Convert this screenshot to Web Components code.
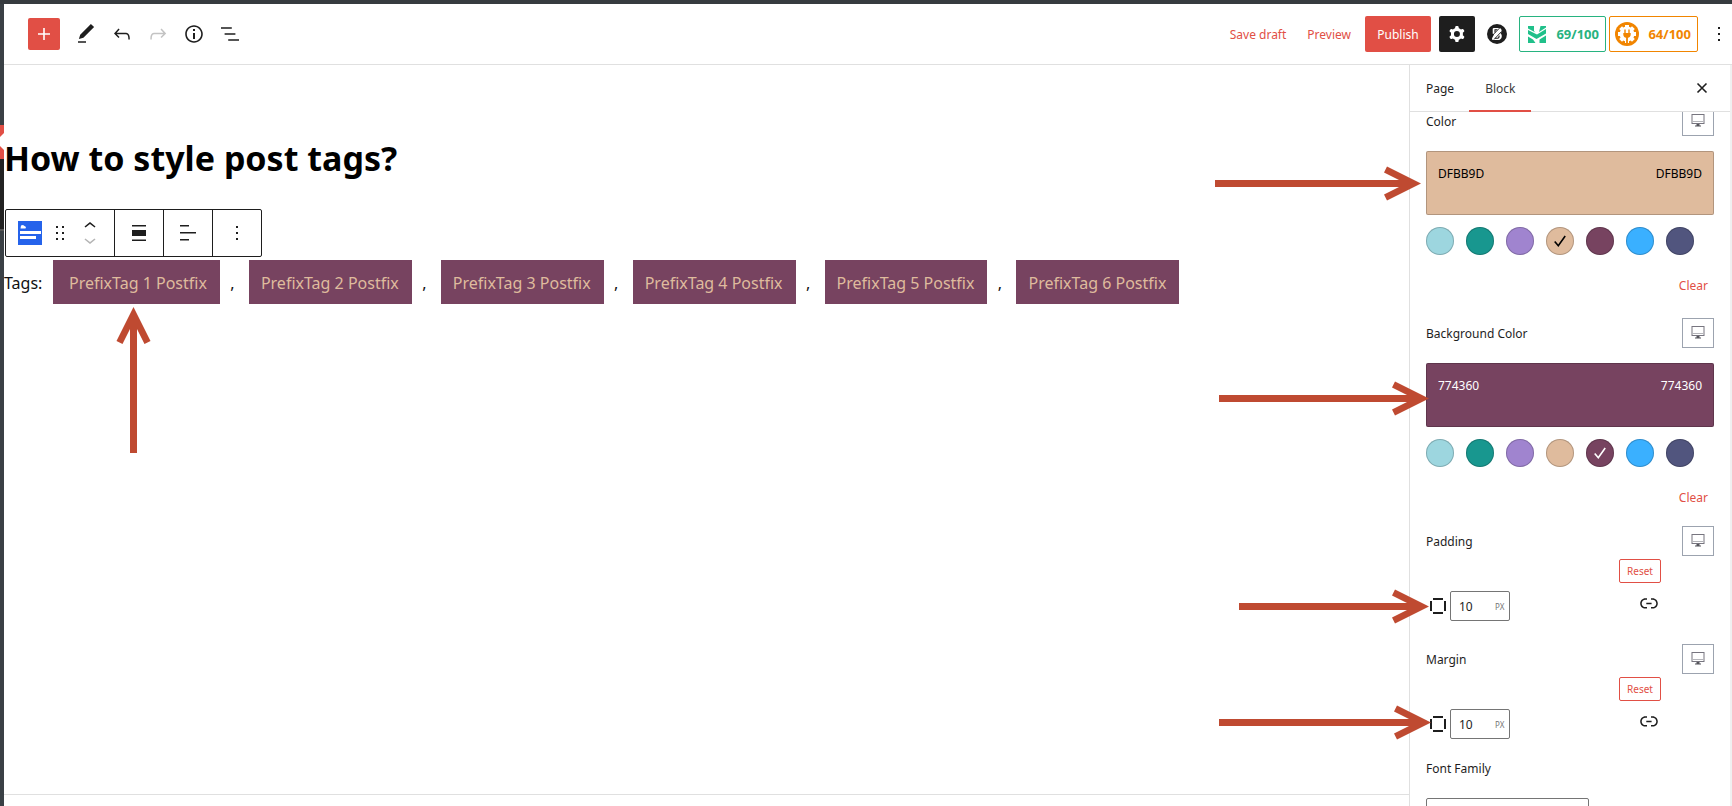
<!DOCTYPE html>
<html lang="en">
<head>
<meta charset="utf-8">
<title>How to style post tags?</title>
<style>
  body { margin: 0; background: #fff; }
</style>
</head>
<body>
<editor-app></editor-app>

<script>
const define = (name, html, setup) => {
  const template = document.createElement('template');
  template.innerHTML = html;
  customElements.define(name, class extends HTMLElement {
    constructor() {
      super();
      this.attachShadow({ mode: 'open' }).append(template.content.cloneNode(true));
    }
    connectedCallback() { if (setup) setup(this, this.shadowRoot); }
  });
};

/* Icons, each in a 24 unit box */
const ICONS = {
  plus: '<path d="M18 11.2h-5.2V6h-1.6v5.2H6v1.6h5.2V18h1.6v-5.2H18z"/>',
  edit: '<path d="M20.1 5.1L16.9 2 6.2 12.7l-1.3 4.4 4.5-1.3L20.1 5.1zM4 20.8h8v-1.5H4v1.5z"/>',
  undo: '<path d="M18.3 11.7c-.6-.6-1.4-.9-2.3-.9H6.7l2.9-3.3-1.1-1-4.5 5L8.5 16l1-1-2.7-2.7H16c.5 0 .9.2 1.3.5 1 1 1 3.4 1 4.5v.3h1.5v-.2c0-1.5 0-4.3-1.5-5.7z"/>',
  redo: '<path d="M15.6 6.5l-1.1 1 2.9 3.3H8c-.9 0-1.7.3-2.3.9-1.4 1.5-1.4 4.2-1.4 5.6v.2h1.5v-.3c0-1.1 0-3.5 1-4.5.3-.3.7-.5 1.3-.5h9.2L14.5 15l1.1 1.1 4.6-4.6-4.6-5z"/>',
  info: '<path d="M12 3.2c-4.8 0-8.8 3.9-8.8 8.8 0 4.8 3.9 8.8 8.8 8.8 4.8 0 8.8-3.9 8.8-8.8 0-4.8-4-8.8-8.8-8.8zm0 16c-4 0-7.2-3.3-7.2-7.2C4.8 8 8 4.8 12 4.8s7.2 3.3 7.2 7.2c0 4-3.2 7.2-7.2 7.2zM11 17h2v-6h-2v6zm0-8h2V7h-2v2z"/>',
  list: '<path d="M13.8 5.2H3v1.5h10.8V5.2zm-3.6 12v1.5H21v-1.5H10.2zm7.2-6H6.6v1.5h10.8v-1.5z"/>',
  cog: '<path fill-rule="evenodd" d="M10.289 4.836A1 1 0 0111.275 4h1.306a1 1 0 01.987.836l.244 1.466c.787.26 1.503.679 2.108 1.218l1.393-.522a1 1 0 011.216.437l.653 1.13a1 1 0 01-.23 1.273l-1.148.944a6.025 6.025 0 010 2.435l1.149.946a1 1 0 01.23 1.272l-.653 1.13a1 1 0 01-1.216.437l-1.394-.522c-.605.54-1.32.958-2.108 1.218l-.244 1.466a1 1 0 01-.987.836h-1.306a1 1 0 01-.986-.836l-.244-1.466a5.995 5.995 0 01-2.108-1.218l-1.394.522a1 1 0 01-1.217-.436l-.653-1.131a1 1 0 01.23-1.272l1.149-.946a6.026 6.026 0 010-2.435l-1.148-.944a1 1 0 01-.23-1.272l.653-1.131a1 1 0 011.217-.437l1.393.522a5.994 5.994 0 012.108-1.218l.244-1.466zM14.929 12a3 3 0 11-6 0 3 3 0 016 0z"/>',
  more: '<path d="M13 19h-2v-2h2v2zm0-6h-2v-2h2v2zm0-6h-2V5h2v2z"/>',
  drag: '<path d="M8 7h2V5H8v2zm0 6h2v-2H8v2zm0 6h2v-2H8v2zm6-14v2h2V5h-2zm0 8h2v-2h-2v2zm0 6h2v-2h-2v2z"/>',
  up: '<path d="M6.5 12.4L12 8l5.5 4.4-.9 1.2L12 10l-4.5 3.6-1-1.2z"/>',
  down: '<path d="M17.5 11.6L12 16l-5.5-4.4.9-1.2L12 14l4.5-3.6 1 1.2z"/>',
  width: '<path d="M19 5.5H5V4h14v1.5ZM19 20H5v-1.5h14V20ZM5 9h14v6H5V9Z"/>',
  align: '<path d="M13 5.5H4V4h9v1.5zm7 7H4V11h16v1.5zm-7 7H4V18h9v1.5z"/>',
  close: '<path fill="none" stroke="currentColor" stroke-width="1.6" d="M7.5 7.5l9 9M16.5 7.5l-9 9"/>',
  link: '<path d="M15.6 7.2H14v1.5h1.6c2 0 3.7 1.7 3.7 3.7s-1.7 3.7-3.7 3.7H14v1.5h1.6c2.8 0 5.2-2.3 5.2-5.2 0-2.9-2.3-5.2-5.2-5.2zM4.7 12.4c0-2 1.7-3.7 3.7-3.7H10V7.2H8.4c-2.9 0-5.2 2.3-5.2 5.2 0 2.9 2.3 5.2 5.2 5.2H10v-1.5H8.4c-2 0-3.7-1.7-3.7-3.7zm4.6.9h5.300v-1.500H9.300v1.500z"/>',
  sides: '<path d="M7 4h10v2H7zM7 18h10v2H7zM4 7h2v10H4zM18 7h2v10h-2z"/>',
  check: '<path fill="none" stroke="currentColor" stroke-width="1.6" d="M6.7 12.5l3.600 4.300L17.200 7"/>',
  block: '<rect width="24" height="24" fill="#2563eb"/><path fill="#fff" d="M2 10h21v3H2zM2 15h16v3H2zM3 4.500l2-.5 1.500 1 1.500 1-.5 1.500h-5z"/>',
  monitor: '<rect x="6" y="5.500" width="12" height="9" fill="#fff" stroke="#77757f" stroke-width="1"/><path fill="#b5b5ba" d="M6.500 12h11v1h-11z"/><path fill="#55555c" d="M10.500 15h3v1.500h1.500v1H9v-1h1.500z"/>',
  brand: '<circle cx="12" cy="12" r="10" fill="#1e1e1e"/><path fill="#fff" d="M8.500 6h5.500c2.800 0 3.500 3.300 1.600 5.400 2.300 1.900 1.200 6.600-2.600 6.600H8.500c-1.300 0-1.900-1-1.300-2.100l1.800-3.400-1.300-.7V6.800z"/><path fill="none" stroke="#1e1e1e" stroke-width=".9" d="M7 13.800l7.800-8M9 17.500l7.500-8"/><path fill="none" stroke="#1e1e1e" stroke-width="1.100" d="M9.800 16.200h2.700c1.400 0 2-1.500 1.300-2.600M10 10.500V7.800h2.300"/>',
  chart: '<path fill="#20c08a" d="M3 4h6v5l1.500 1.500L3 6.500zM3 8l9 4.500L21 7v4.500L11.500 17 3 12zM3 14.500l5 3 2.500 3.500H3zM14.500 17.500L21 13.500V21h-6.500zM15.500 4H21v1.500l-7 4.500z"/>',
  plug: '<circle cx="12" cy="12" r="12" fill="#f18500"/><circle cx="12" cy="12" r="7.400" fill="#fff"/><path fill="none" stroke="#fff" stroke-width="4" d="M12 3v18M3 12h18M5.600 5.600l12.800 12.800M18.400 5.600L5.600 18.400"/><path fill="#f18500" d="M9.300 7.500h1.400v3.500h2.600V7.500h1.400V11h1v1.500c0 1.800-1.200 3-2.800 3.300V21h-1.800v-5.200c-1.600-.3-2.800-1.500-2.800-3.300V11h1z"/>'
};

define('ui-icon', `
<style>
  :host { display: block; width: 24px; height: 24px; flex: none; }
  svg { display: block; width: 100%; height: 100%; fill: currentColor; }
</style>
<svg viewBox="0 0 24 24" aria-hidden="true"></svg>`, (host, root) => {
  root.querySelector('svg').innerHTML = ICONS[host.getAttribute('name')];
});

define('icon-button', `
<style>
  :host { display: flex; width: 36px; height: 36px; flex: none; color: #1e1e1e; }
  button { all: unset; flex: 1; display: flex; align-items: center; justify-content: center;
           border-radius: 2px; background: var(--button-bg, none); min-width: 0; }
</style>
<button type="button"></button>`, (host, root) => {
  const button = root.querySelector('button');
  button.setAttribute('aria-label', host.getAttribute('label'));
  const icon = document.createElement('ui-icon');
  icon.setAttribute('name', host.getAttribute('icon'));
  button.replaceChildren(icon);
});

define('score-badge', `
<style>
  :host { display: flex; }
  button { all: unset; box-sizing: border-box; display: flex; align-items: center; justify-content: space-between;
           width: 100%; height: 36px; padding: 0 6px 0 5px; border: 1px solid; border-radius: 2px;
           color: var(--tone); font-weight: 700; font-size: 13px; line-height: 20px; }
</style>
<button type="button"><slot name="icon"></slot><span><slot></slot></span></button>`);

define('editor-header', `
<style>
  :host { display: flex; align-items: center; justify-content: space-between; height: 60px;
          padding: 0 1px 0 24px; border-bottom: 1px solid #e0e0e0; }
  div { display: flex; align-items: center; }
  .add { width: 32px; height: 32px; margin-right: 8px; color: #fff; --button-bg: #e14f45; }
  .off { color: #c3c3c3; }
  a { padding-top: 2px; color: #e14f45; text-decoration: none; font-size: 12px; line-height: 20px; }
  .save { margin-right: 21px; }
  .preview { margin-right: 14px; }
  .publish { all: unset; box-sizing: border-box; width: 66px; height: 36px; padding-top: 2px; margin-right: 8px;
             border-radius: 2px; background: #e14f45; color: #fff; font-size: 12px; line-height: 34px; text-align: center; }
  .settings { color: #fff; --button-bg: #1e1e1e; margin-right: 4px; }
  .brand { margin-right: 4px; }
  .green { --tone: #27b380; width: 87px; margin-right: 3px; }
  .orange { --tone: #f18500; width: 89px; margin-right: 9px; }
  .more { width: 24px; }
</style>
<div>
  <icon-button class="add" icon="plus" label="Add block"></icon-button>
  <icon-button icon="edit" label="Tools"></icon-button>
  <icon-button icon="undo" label="Undo"></icon-button>
  <icon-button class="off" icon="redo" label="Redo"></icon-button>
  <icon-button icon="info" label="Details"></icon-button>
  <icon-button icon="list" label="List view"></icon-button>
</div>
<div>
  <a class="save" href="#save">Save draft</a>
  <a class="preview" href="#preview">Preview</a>
  <button class="publish" type="button">Publish</button>
  <icon-button class="settings" icon="cog" label="Settings"></icon-button>
  <icon-button class="brand" icon="brand" label="Blocks"></icon-button>
  <score-badge class="green"><ui-icon slot="icon" name="chart"></ui-icon>69/100</score-badge>
  <score-badge class="orange"><ui-icon slot="icon" name="plug"></ui-icon>64/100</score-badge>
  <icon-button class="more" icon="more" label="Options"></icon-button>
</div>`);

define('admin-rail', `
<style>
  :host { display: flex; flex-direction: column; width: 4px; background: #3a4045; }
  .top { height: 121px; }
  svg { display: block; width: 4px; height: 34px; }
  .menu { height: 70px; background: #222; border-bottom: 2px solid #555; }
</style>
<div class="top"></div>
<svg viewBox="0 0 4 34" aria-hidden="true"><path fill="#e14f45" d="M0 0h4v34H0z"/><path fill="#fff" d="M4 8v17L0 21v-9z"/></svg>
<div class="menu"></div>`);

define('block-toolbar', `
<style>
  :host { display: inline-flex; height: 46px; border: 1px solid #1e1e1e; border-radius: 2px; background: #fff; margin-left: 1px; }
  div { display: flex; align-items: center; }
  .main { gap: 6px; padding: 0 12px; }
  .main icon-button { width: 24px; }
  .mover { flex-direction: column; }
  .mover icon-button { height: 14px; }
  .off { color: #b5b5b5; }
  .cell { width: 48px; justify-content: center; border-left: 1px solid #1e1e1e; }
</style>
<div class="main" role="toolbar" aria-label="Block tools">
  <icon-button icon="block" label="Post tags"></icon-button>
  <icon-button icon="drag" label="Drag"></icon-button>
  <div class="mover">
    <icon-button icon="up" label="Move up"></icon-button>
    <icon-button class="off" icon="down" label="Move down"></icon-button>
  </div>
</div>
<div class="cell"><icon-button icon="width" label="Align"></icon-button></div>
<div class="cell"><icon-button icon="align" label="Align text"></icon-button></div>
<div class="cell"><icon-button icon="more" label="Options"></icon-button></div>`);

define('post-tag', `
<style>
  :host { display: flex; }
  a { padding: 11px 13px 9px 12px; background: #774360; color: #dfbb9d; text-decoration: none; white-space: nowrap; }
  :host([lead]) a { padding-left: 16px; }
</style>
<a href="#tag"><slot></slot></a>`);

define('tag-list', `
<style>
  :host { display: flex; font-size: 16px; line-height: 24px; color: #111; }
  .label { width: 49px; padding: 11px 0 9px; }
  .sep { width: 25px; padding: 11px 4px 9px 0; text-align: center; }
</style>
<span class="label">Tags:</span>`, (host, root) => {
  for (let i = 1; i <= 6; i++) {
    const tag = document.createElement('post-tag');
    tag.textContent = 'PrefixTag ' + i + ' Postfix';
    if (i === 1) tag.setAttribute('lead', '');
    else root.append(Object.assign(document.createElement('span'), { className: 'sep', textContent: ',' }));
    root.append(tag);
  }
});

define('editor-canvas', `
<style>
  :host { display: flex; flex-direction: column; justify-content: space-between; overflow: hidden; }
  main { padding-top: 69px; }
  h1 { margin: 0 0 27px; font-size: 34px; line-height: 48px; font-weight: 700; color: #000; }
  tag-list { margin-top: 3px; }
  block-toolbar { vertical-align: top; }
  footer { height: 11px; border-top: 1px solid #e0e0e0; }
</style>
<main>
  <h1>How to style post tags?</h1>
  <block-toolbar></block-toolbar>
  <tag-list></tag-list>
</main>
<footer></footer>`);

/* Label on the left, device switch on the right */
define('control-head', `
<style>
  :host { display: flex; align-items: center; justify-content: space-between; height: 30px; }
  ::slotted(*) { padding-top: 2px; }
  button { all: unset; box-sizing: border-box; width: 32px; height: 30px; padding: 1px 3px; border: 1px solid #9ca3af; }
</style>
<slot></slot>
<button type="button" aria-label="Device"><ui-icon name="monitor"></ui-icon></button>`);

const SWATCHES = ['#9dd6df', '#18978f', '#a084cf', '#dfbb9d', '#774360', '#3ab0ff', '#51557e'];

define('color-control', `
<style>
  :host { display: block; margin-bottom: 13px; }
  .value { all: unset; box-sizing: border-box; display: flex; justify-content: space-between; width: 100%; height: 64px;
           margin: 15px 0 12px; padding: 13px 12px; border-radius: 2px; line-height: 20px;
           box-shadow: inset 0 0 0 1px rgba(0,0,0,.2); }
  .swatches { display: flex; gap: 12px; }
  .swatch { all: unset; width: 28px; height: 28px; border-radius: 50%; box-shadow: inset 0 0 0 1px rgba(0,0,0,.2); }
  ui-icon { margin: 2px; }
  .clear { all: unset; display: block; width: fit-content; margin: 16px 6px 0 auto; color: #e14f45; line-height: 30px; }
</style>
<control-head><span></span></control-head>
<button class="value" type="button"><span></span><span></span></button>
<div class="swatches"></div>
<button class="clear" type="button">Clear</button>`, (host, root) => {
  const value = host.getAttribute('value'), ink = host.getAttribute('ink');
  root.querySelector('control-head span').textContent = host.getAttribute('label');
  const box = root.querySelector('.value');
  box.style.background = '#' + value;
  box.style.color = ink;
  for (const span of box.children) span.textContent = value;
  for (const colour of SWATCHES) {
    const dot = document.createElement('button');
    dot.type = 'button';
    dot.className = 'swatch';
    dot.style.background = colour;
    dot.setAttribute('aria-label', colour);
    if (colour.slice(1).toUpperCase() === value) {
      dot.style.color = ink;
      const icon = document.createElement('ui-icon');
      icon.setAttribute('name', 'check');
      dot.append(icon);
    }
    root.querySelector('.swatches').append(dot);
  }
});

define('spacing-control', `
<style>
  :host { display: block; margin-bottom: 20px; }
  .body { padding-right: 53px; }
  .reset { all: unset; box-sizing: border-box; display: block; width: 42px; height: 24px; margin: 3px 0 8px auto;
           border: 1px solid #e14f45; border-radius: 2px; color: #e14f45; font-size: 10px; line-height: 22px; text-align: center; }
  .row { display: flex; align-items: flex-start; justify-content: space-between; }
  .field { display: flex; align-items: center; }
  .box { display: flex; align-items: center; box-sizing: border-box; width: 60px; height: 30px; padding: 1px 4px 0 8px;
         border: 1px solid #757575; border-radius: 2px; }
  input { all: unset; flex: 1; min-width: 0; font-size: 12px; line-height: 20px; color: #1e1e1e; }
  select { all: unset; font-size: 8px; line-height: 12px; color: #757575; }
  icon-button { width: 24px; height: 24px; }
</style>
<control-head><label for="size"></label></control-head>
<div class="body">
  <button class="reset" type="button">Reset</button>
  <div class="row">
    <div class="field">
      <ui-icon name="sides"></ui-icon>
      <div class="box"><input id="size" type="text" value="10"><select aria-label="Unit"><option>PX</option></select></div>
    </div>
    <icon-button icon="link" label="Link sides"></icon-button>
  </div>
</div>`, (host, root) => {
  const name = host.getAttribute('label');
  root.querySelector('label').textContent = name;
  root.querySelector('input').setAttribute('aria-label', name);
});

define('settings-sidebar', `
<style>
  :host { display: flex; flex-direction: column; box-sizing: border-box; border-left: 1px solid #e0e0e0;
          border-right: 2px solid #f0f0f0; overflow: hidden; font-size: 12px; line-height: 20px; color: #1e1e1e; }
  nav { display: flex; height: 46px; flex: none; border-bottom: 1px solid #e0e0e0; padding-right: 10px; }
  nav button { all: unset; box-sizing: border-box; padding: 0 16px; line-height: 47px; height: 47px; }
  nav .page { padding-right: 15px; color: #1e1e1e; }
  nav .on { box-shadow: inset 0 -2px #e14f45; color: #3c3c3c; }
  nav icon-button { margin: 5px 0 0 auto; }
  .scroll { flex: 1; min-height: 0; overflow: hidden; padding: 0 16px; }
  .inner { margin-top: -6px; }
  color-control + color-control { margin-top: 17px; }
  spacing-control + spacing-control { margin-top: 23px; }
  .font { display: block; margin-bottom: 19px; }
  select { appearance: none; display: block; box-sizing: border-box; width: 163px; height: 30px; border: 1px solid #757575;
           border-radius: 2px; background: #fff; }
</style>
<nav>
  <button class="page" type="button">Page</button>
  <button class="on" type="button">Block</button>
  <icon-button icon="close" label="Close settings"></icon-button>
</nav>
<div class="scroll">
  <div class="inner">
    <color-control label="Color" value="DFBB9D" ink="#000"></color-control>
    <color-control label="Background Color" value="774360" ink="#fff"></color-control>
    <spacing-control label="Padding"></spacing-control>
    <spacing-control label="Margin"></spacing-control>
    <label class="font" for="font">Font Family</label>
    <select id="font"></select>
  </div>
</div>`);

/* Arrow that points right, or up with the "up" attribute; its length comes from the host */
define('callout-arrow', `
<style>
  :host { position: absolute; display: flex; align-items: center; height: 35px; color: #bf4a31; pointer-events: none; }
  i { flex: 1; height: 7px; background: currentColor; }
  svg { display: block; width: 37px; height: 35px; fill: currentColor; flex: none; }
  :host([up]) { flex-direction: column-reverse; width: 35px; height: auto; }
  :host([up]) i { width: 7px; }
  :host([up]) svg { width: 35px; height: 37px; }
</style>
<i></i><svg aria-hidden="true"></svg>`, (host, root) => {
  const svg = root.querySelector('svg'), up = host.hasAttribute('up');
  svg.setAttribute('viewBox', up ? '0 0 35 37' : '0 0 37 35');
  svg.innerHTML = up
    ? '<path d="M17.500 0l17 34-6 3L21 22v15h-7V22L6.500 37l-6-3z"/>'
    : '<path d="M37 17.500L3 .5 0 6.500 15 14H0v7h15L0 28.500l3 6z"/>';
});

define('editor-app', `
<style>
  :host { position: relative; display: grid; grid-template: 61px minmax(0, 1fr) / 4px minmax(0, 1fr) 323px;
          box-sizing: border-box; height: 100vh; border-top: 4px solid #363b3f; overflow: hidden;
          font-family: "Noto Sans", "Open Sans", sans-serif; }
  admin-rail { grid-row: 1 / 3; }
  editor-header { grid-column: 2 / 4; }
  .a { top: 162px; right: 311px; width: 206px; }
  .b { top: 377px; right: 303px; width: 210px; }
  .c { top: 585px; right: 303px; width: 190px; }
  .d { top: 701px; right: 301px; width: 212px; }
  .e { top: 303px; left: 116px; height: 146px; }
</style>
<admin-rail></admin-rail>
<editor-header></editor-header>
<editor-canvas></editor-canvas>
<settings-sidebar></settings-sidebar>
<callout-arrow class="a"></callout-arrow>
<callout-arrow class="b"></callout-arrow>
<callout-arrow class="c"></callout-arrow>
<callout-arrow class="d"></callout-arrow>
<callout-arrow class="e" up style="height:146px"></callout-arrow>`);
</script>
</body>
</html>
